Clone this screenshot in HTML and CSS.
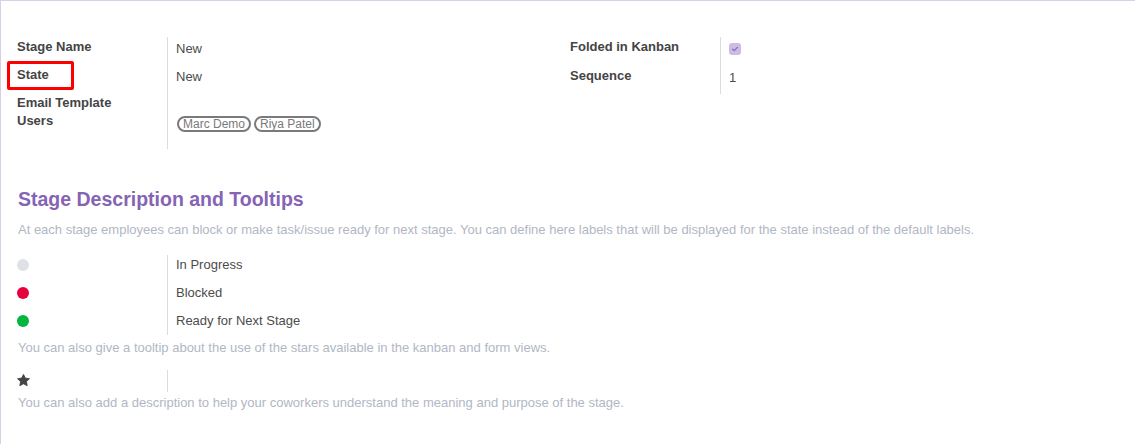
FILE: index.html
```html
<!DOCTYPE html>
<html lang="en">
<head>
<meta charset="utf-8">
<title>Stage</title>
<link rel="stylesheet" href="styles.css">
</head>
<body>
<div class="sheet">
  <div class="top-groups">
    <div class="group group-left">
      <div class="label">Stage Name</div>
      <div class="value v1">New</div>
      <div class="label"><span class="mark">State</span></div>
      <div class="value v1">New</div>
      <div class="label">Email Template</div>
      <div class="value"></div>
      <div class="label">Users</div>
      <div class="value">
        <div class="tags">
          <span class="tag">Marc Demo</span>
          <span class="tag">Riya Patel</span>
        </div>
      </div>
    </div>
    <div class="group group-right">
      <div class="label">Folded in Kanban</div>
      <div class="value"><span class="checkbox"><svg viewBox="0 0 12 12" width="12" height="12"><path d="M3.6 6.2 L5.2 7.6 L8.4 4.4" fill="none" stroke="#8a6cbc" stroke-width="1.3" stroke-linecap="round" stroke-linejoin="round"/></svg></span></div>
      <div class="label">Sequence</div>
      <div class="value v2">1</div>
    </div>
  </div>

  <h2 class="section-title">Stage Description and Tooltips</h2>
  <p class="muted intro">At each stage employees can block or make task/issue ready for next stage. You can define here labels that will be displayed for the state instead of the default labels.</p>

  <div class="group states">
    <div class="label"><span class="dot dot-grey"></span></div>
    <div class="value">In Progress</div>
    <div class="label"><span class="dot dot-red"></span></div>
    <div class="value">Blocked</div>
    <div class="label"><span class="dot dot-green"></span></div>
    <div class="value">Ready for Next Stage</div>
  </div>

  <p class="muted tip">You can also give a tooltip about the use of the stars available in the kanban and form views.</p>

  <div class="group stars">
    <div class="label"><svg class="star" viewBox="0 0 24 24" width="13" height="13"><path d="M12 0.8 L15.4 7.6 L23 8.7 L17.5 14 L18.8 21.6 L12 18 L5.2 21.6 L6.5 14 L1 8.7 L8.6 7.6 Z" fill="#444" stroke="#444" stroke-width="1.6" stroke-linejoin="round"/></svg></div>
    <div class="value"></div>
  </div>

  <p class="muted desc">You can also add a description to help your coworkers understand the meaning and purpose of the stage.</p>
</div>
</body>
</html>
```

FILE: styles.css
```css
*, *::before, *::after { box-sizing: border-box; }

html, body {
  margin: 0;
  padding: 0;
  background: #fff;
}

body {
  font-family: "Liberation Sans", Arial, sans-serif;
  font-size: 13px;
  line-height: 20px;
  color: #4c4c4c;
}

.sheet {
  min-height: 444px;
  border-top: 1px solid #d6d0e4;
  border-left: 1px solid #d6d0e4;
  padding: 36px 16px 0 16px;
}

.top-groups {
  display: grid;
  grid-template-columns: 1fr 1fr;
  column-gap: 4px;
  align-items: start;
}

.group {
  display: grid;
  grid-template-columns: 150px 1fr;
  align-content: start;
}

.label {
  font-weight: bold;
  color: #444;
  position: relative;
}

.value {
  border-left: 1px solid #dcdcdc;
  padding-left: 8px;
}

.v1 { padding-top: 2px; }
.v2 { padding-top: 2px; }

.group-left > :nth-child(1),
.group-left > :nth-child(2),
.group-left > :nth-child(3),
.group-left > :nth-child(4) { height: 28px; }
.group-left > :nth-child(5),
.group-left > :nth-child(6) { height: 18px; }
.group-left > :nth-child(7),
.group-left > :nth-child(8) { height: 38px; }

.group-right > :nth-child(1),
.group-right > :nth-child(2) { height: 29px; }
.group-right > :nth-child(3),
.group-right > :nth-child(4) { height: 28px; }

.mark {
  position: relative;
  display: inline-block;
}

.mark::after {
  content: "";
  position: absolute;
  left: -10px;
  top: -4px;
  width: 67px;
  height: 29px;
  border: 3px solid #ff0000;
  border-radius: 2px;
}

.tags {
  display: flex;
  gap: 3px;
  padding-top: 5px;
  padding-left: 1px;
}

.tag {
  display: inline-block;
  border: 2px solid #7a7a7a;
  border-radius: 10px;
  padding: 0 4px;
  font-size: 12px;
  line-height: 12px;
  height: 16px;
  color: #7a7a7a;
}

.checkbox {
  display: inline-block;
  width: 12px;
  height: 12px;
  margin-top: 6px;
  background: #cbbce4;
  border-radius: 3px;
  vertical-align: top;
}

.checkbox svg { display: block; }

.section-title {
  margin: 38px 0 0 1px;
  font-size: 19.5px;
  line-height: 24px;
  font-weight: bold;
  color: #8563b5;
}

.muted {
  color: #b1b7c4;
  margin: 0 0 0 1px;
}

.intro { margin-top: 9px; }

.states {
  margin-top: 15px;
}

.states > div { height: 28px; }
.states > :nth-child(5),
.states > :nth-child(6) { height: 24px; }

.dot {
  display: inline-block;
  width: 12px;
  height: 12px;
  border-radius: 50%;
  margin-top: 4px;
  vertical-align: top;
}

.dot-grey { background: #dee2e6; }
.dot-red { background: #e6003c; }
.dot-green { background: #00b63e; }

.tip { margin-top: 3px; }

.stars {
  margin-top: 12px;
}

.stars > div { height: 22px; }

.star {
  display: block;
  margin-top: 4px;
}

.desc { margin-top: 1px; }
```
